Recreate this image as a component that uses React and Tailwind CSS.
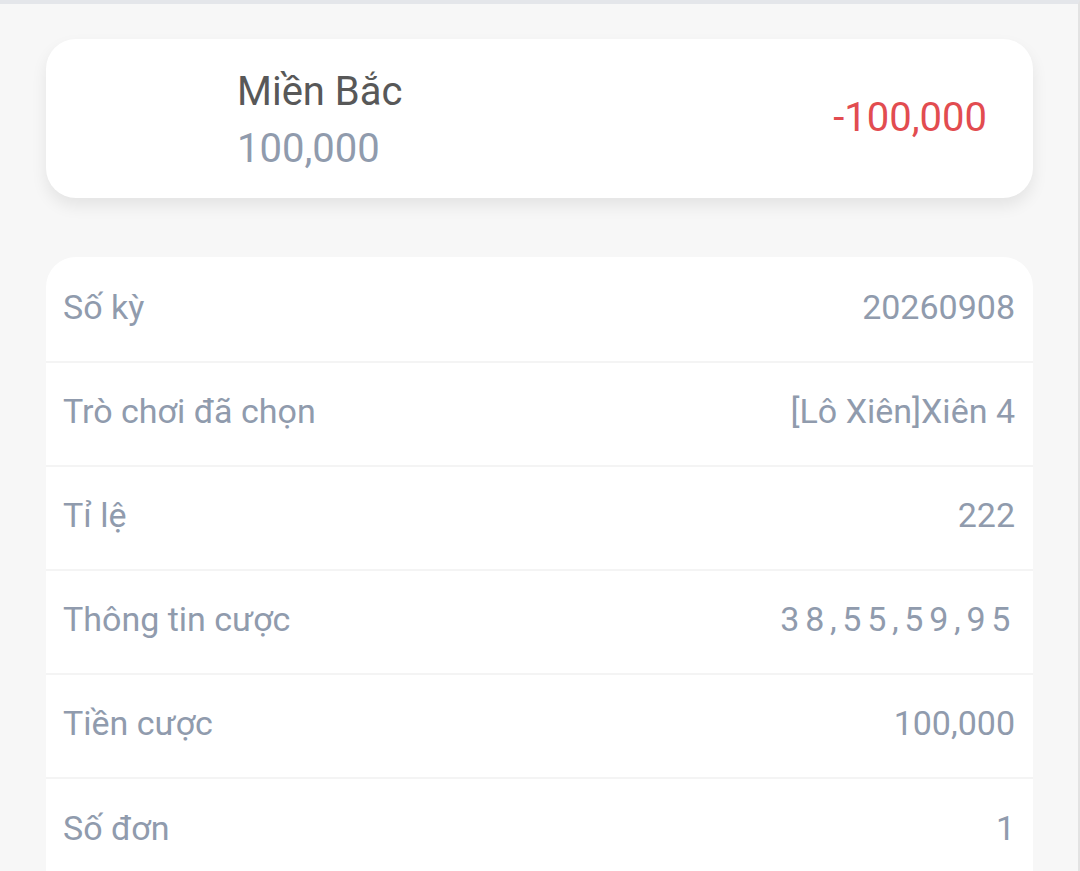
export default function App() {
  const rows = [
    ["Số kỳ", "20260908", ""],
    ["Trò chơi đã chọn", "[Lô Xiên]Xiên 4", ""],
    ["Tỉ lệ", "222", ""],
    ["Thông tin cược", "38,55,59,95", "tracking-[5.7px] mr-[-1px]"],
    ["Tiền cược", "100,000", ""],
    ["Số đơn", "1", ""],
  ];
  return (
    <div
      className="w-[1080px] h-[871px] overflow-hidden bg-[#f7f7f7] border-t-[4px] border-[#e4e6ea] border-r-2 border-r-[#e3e3e3]"
      style={{ fontFamily: "Roboto, 'Noto Sans', sans-serif" }}
    >
      <div className="pl-[46px] pr-[45px] pt-[35px]">
        <div className="h-[159px] bg-white rounded-[30px] shadow-[0_8px_16px_rgba(0,0,0,0.08)] flex items-center justify-between pl-[191px] pr-[46px]">
          <div className="flex flex-col mt-[3px]">
            <div className="text-[40px] leading-[57px] text-[#585858]">Miền Bắc</div>
            <div className="text-[40px] leading-[57px] text-[#909bad]">100,000</div>
          </div>
          <div className="text-[40px] text-[#e24c50] -mt-[2px]">-100,000</div>
        </div>
        <div className="mt-[59px] pt-[2px] bg-white rounded-t-[30px] overflow-hidden">
          {rows.map(([l, v, cls], i) => (
            <div
              key={i}
              className={`h-[104px] flex items-center justify-between pl-[17px] pr-[18px] pb-[6px] ${i < rows.length - 1 ? "border-b-2 border-[#f4f4f4]" : ""}`}
            >
              <span className="text-[34px] text-[#909bad]">{l}</span>
              <span className={`text-[34px] text-[#909bad] ${cls}`}>{v}</span>
            </div>
          ))}
        </div>
      </div>
    </div>
  );
}
